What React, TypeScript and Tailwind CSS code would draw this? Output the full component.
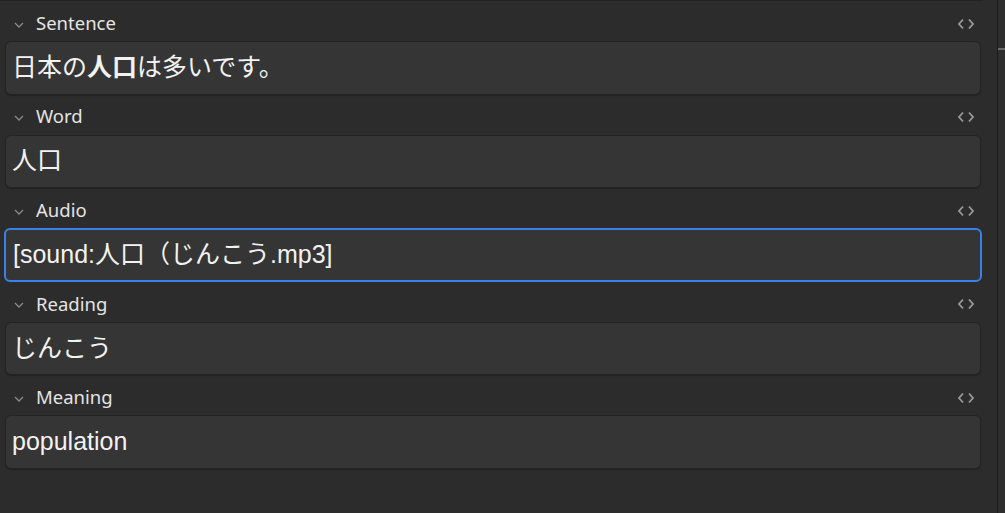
import React from "react";

const fields: { label: string; content: React.ReactNode; focused?: boolean }[] = [
  {
    label: "Sentence",
    content: (
      <>
        日本の<b className="font-bold">人口</b>は多いです。
      </>
    ),
  },
  { label: "Word", content: "人口" },
  { label: "Audio", content: "[sound:人口（じんこう.mp3]", focused: true },
  { label: "Reading", content: "じんこう" },
  { label: "Meaning", content: "population" },
];

function ChevronDown() {
  return (
    <svg width="10" height="6" viewBox="0 0 10 6" className="shrink-0">
      <path d="M1 1 L5 5 L9 1" fill="none" stroke="#8a8a8a" strokeWidth="1.3" />
    </svg>
  );
}

function CodeIcon() {
  return (
    <svg width="18" height="12" viewBox="0 0 18 12">
      <path d="M6 1.5 L2 6 L6 10.5" fill="none" stroke="#9a9a9a" strokeWidth="1.8" />
      <path d="M12 1.5 L16 6 L12 10.5" fill="none" stroke="#9a9a9a" strokeWidth="1.8" />
    </svg>
  );
}

export default function App() {
  return (
    <div
      className="w-[1005px] h-[513px] bg-[#2c2c2c] flex overflow-hidden"
      style={{ fontFamily: '"Noto Sans", "Noto Sans CJK JP", sans-serif' }}
    >
      <div className="w-[998px] h-full border-r border-[#1c1c1c] flex flex-col">
        <div className="w-[983px] h-[1px] bg-[#222222]" />
        <div className="flex flex-col pl-[5px] pr-[16px]">
          {fields.map((f) => (
            <div key={f.label} className="flex flex-col">
              <div className="h-[40px] flex items-center pt-[4px]">
                <div className="w-[31px] flex justify-end pr-[12px] pt-[3px]">
                  <ChevronDown />
                </div>
                <span className="text-[18.5px] text-[#e4e4e4] leading-none">{f.label}</span>
                <div className="ml-auto mr-[6px] pt-[1px]">
                  <CodeIcon />
                </div>
              </div>
              <div
                className={
                  f.focused
                    ? "h-[53.6px] rounded-[6px] bg-[#353535] border-2 border-[#3b80ea] flex items-center px-[7px] -mx-[1px]"
                    : "h-[53.6px] rounded-[6px] bg-[#353535] border border-[#232323] shadow-[0_1px_1px_rgba(0,0,0,0.25)] flex items-center px-[6px]"
                }
              >
                <span
                  className="text-[25px] text-[#f2f2f2] leading-none whitespace-nowrap -mt-[1px]"
                  style={{ fontFamily: '"Liberation Sans", "Noto Sans CJK JP", sans-serif' }}
                >
                  {f.content}
                </span>
              </div>
            </div>
          ))}
        </div>
      </div>
      <div className="flex-1 h-full bg-[#2e2e2e] relative">
        <div className="absolute left-0 right-0 top-[48px] h-[2px] bg-[#6a6a6a]" />
      </div>
    </div>
  );
}
